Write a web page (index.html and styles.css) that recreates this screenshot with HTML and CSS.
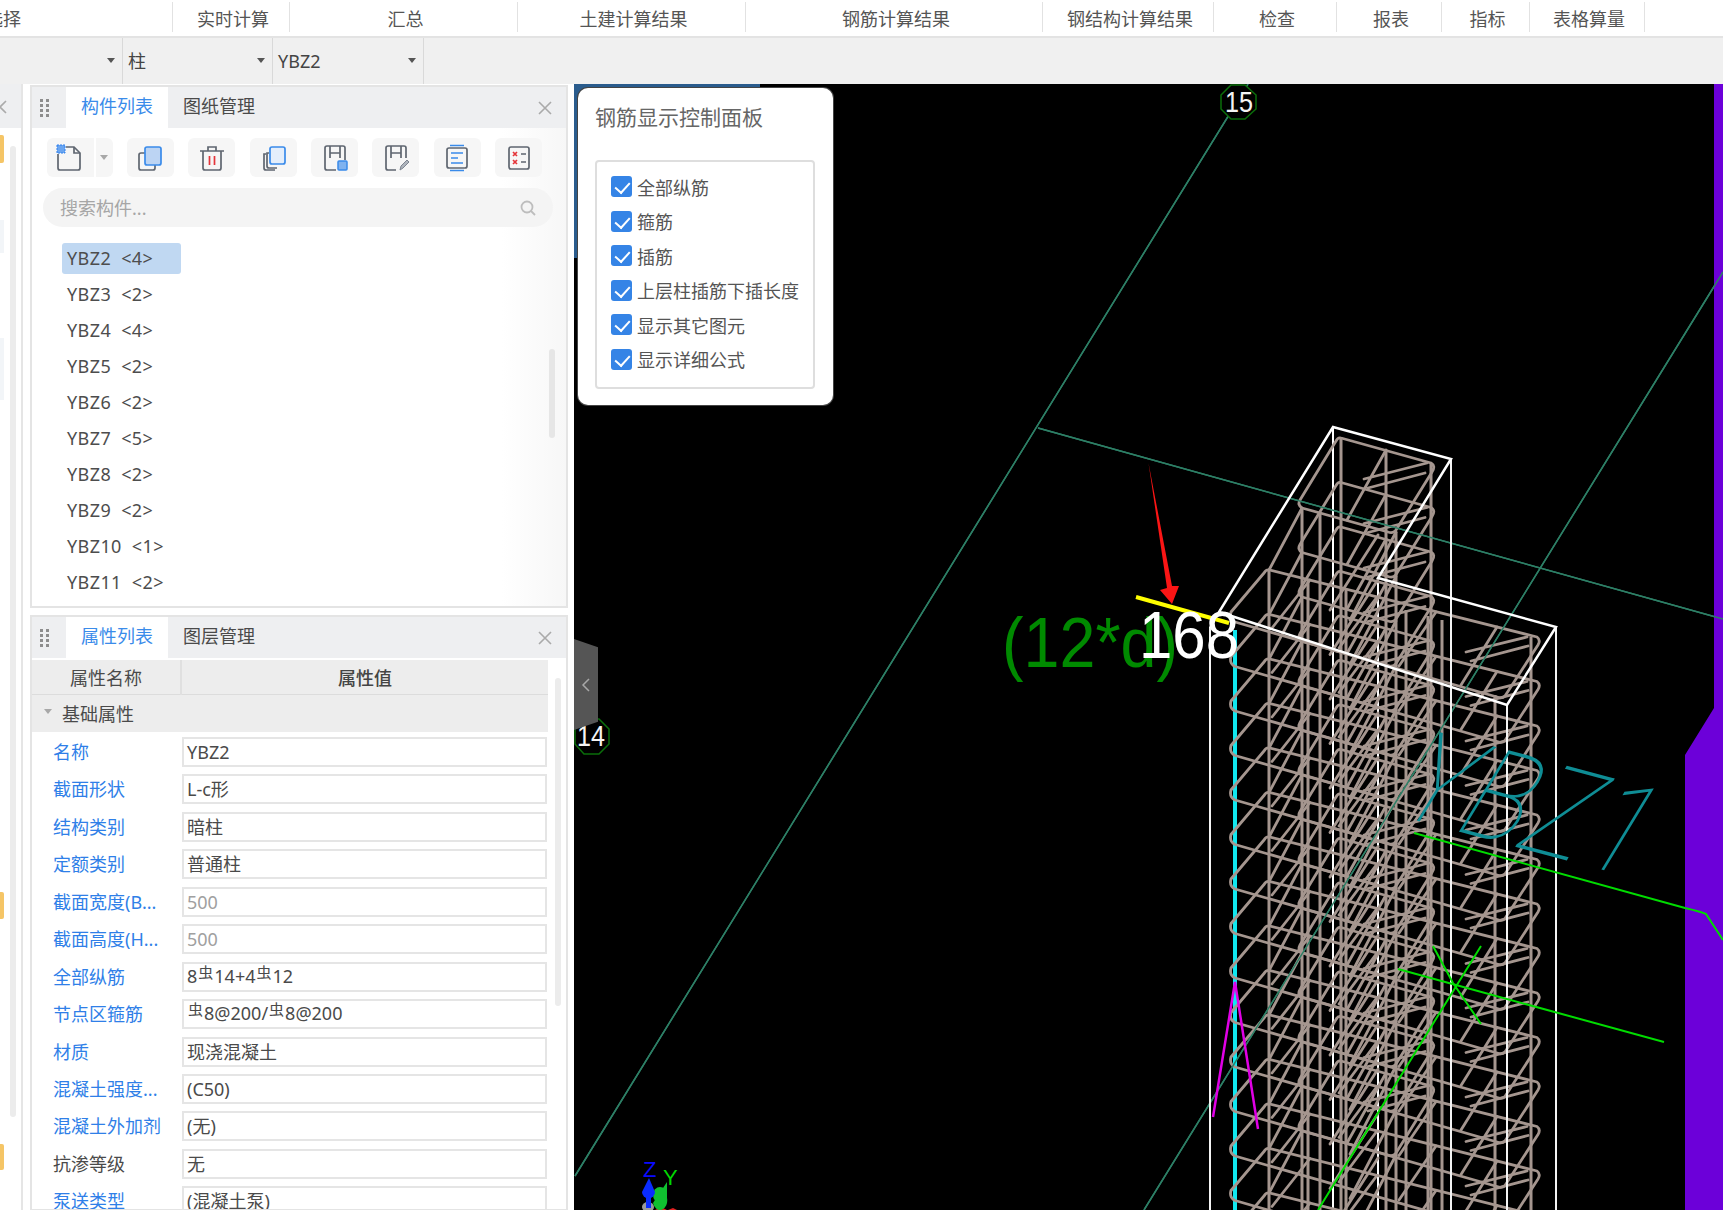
FILE: index.html
```html
<!DOCTYPE html>
<html lang="zh-CN">
<head>
<meta charset="utf-8">
<title>钢筋显示控制面板</title>
<link rel="stylesheet" href="styles.css">
</head>
<body>
<header class="menu">
  <div class="menu-cell menu-first"><span class="menu-clip">选择</span></div>
  <div class="menu-cell">实时计算</div>
  <div class="menu-cell">汇总</div>
  <div class="menu-cell">土建计算结果</div>
  <div class="menu-cell">钢筋计算结果</div>
  <div class="menu-cell">钢结构计算结果</div>
  <div class="menu-cell">检查</div>
  <div class="menu-cell">报表</div>
  <div class="menu-cell">指标</div>
  <div class="menu-cell">表格算量</div>
</header>
<nav class="selects">
  <div class="select"><i class="caret"></i></div>
  <div class="select">柱<i class="caret"></i></div>
  <div class="select">YBZ2<i class="caret"></i></div>
</nav>
<main class="main">
  <aside class="sidebar">
    <div class="strip">
      <div class="strip-head"><svg class="strip-x" width="14" height="14" viewBox="0 0 14 14"><path d="M1 1l12 12M13 1L1 13"/></svg></div>
      <i class="strip-tag tag-a"></i><i class="strip-tag tag-b"></i><i class="strip-tag tag-c"></i>
      <i class="strip-pale pale-a"></i><i class="strip-pale pale-b"></i>
      <i class="strip-scroll"></i>
    </div>
    <div class="panels">
      <section class="panel panel-list">
        <div class="panel-head">
          <svg class="grip" width="10" height="19" viewBox="0 0 10 19"><g><rect x="0" y="0" width="3" height="3"/><rect x="6" y="0" width="3" height="3"/><rect x="0" y="5" width="3" height="3"/><rect x="6" y="5" width="3" height="3"/><rect x="0" y="10" width="3" height="3"/><rect x="6" y="10" width="3" height="3"/><rect x="0" y="15" width="3" height="3"/><rect x="6" y="15" width="3" height="3"/></g></svg>
          <div class="tab tab-on">构件列表</div>
          <div class="tab">图纸管理</div>
          <svg class="close" width="14" height="14" viewBox="0 0 14 14"><path d="M1 1l12 12M13 1L1 13"/></svg>
        </div>
        <div class="tools">
          <div class="tool tool-split">
            <svg width="26" height="28" viewBox="0 0 26 28" class="ico"><path d="M10 3h8l6 6v15a2 2 0 0 1-2 2H4a2 2 0 0 1-2-2V10"/><path d="M18 3v6h6"/><path class="blue-fill" d="M1 1h8v8H1z"/></svg>
          </div>
          <div class="tool-drop"><i class="caret caret-grey"></i></div>
          <div class="tool">
            <svg width="26" height="28" viewBox="0 0 26 28" class="ico"><path d="M8 9H4a2 2 0 0 0-2 2v13a2 2 0 0 0 2 2h12a2 2 0 0 0 2-2v-3"/><rect class="blue-box" x="8" y="3" width="16" height="18" rx="2"/></svg>
          </div>
          <div class="tool">
            <svg width="26" height="28" viewBox="0 0 26 28" class="ico"><path d="M1 7h24M9 7V3h8v4M4 7v17a2 2 0 0 0 2 2h14a2 2 0 0 0 2-2V7"/><path class="red" d="M10.500 12v9M15.500 12v9"/></svg>
          </div>
          <div class="tool">
            <svg width="26" height="28" viewBox="0 0 26 28" class="ico"><path d="M6 10H4v14a2 2 0 0 0 2 2h9"/><path d="M9 9H7v13a2 2 0 0 0 2 2h8"/><rect class="blue-pale" x="10" y="3" width="15" height="17" rx="2"/></svg>
          </div>
          <div class="tool">
            <svg width="26" height="28" viewBox="0 0 26 28" class="ico"><path d="M14 26H5a2 2 0 0 1-2-2V4a2 2 0 0 1 2-2h16a2 2 0 0 1 2 2v12"/><path d="M8 14V2M8 9h10M18 2v12"/><rect class="blue-solid" x="16" y="17" width="9" height="9" rx="1"/></svg>
          </div>
          <div class="tool">
            <svg width="26" height="28" viewBox="0 0 26 28" class="ico"><path d="M13 26H5a2 2 0 0 1-2-2V4a2 2 0 0 1 2-2h16a2 2 0 0 1 2 2v10"/><path d="M8 14V2M8 9h10M18 2v12"/><path class="pen" d="M17 26l1-4 6-6 2 2-6 6z"/></svg>
          </div>
          <div class="tool">
            <svg width="26" height="28" viewBox="0 0 26 28" class="ico"><rect x="3" y="4" width="20" height="20" rx="2"/><path class="blue-line" d="M6 1.500h14M6 26.500h14M7 9h12M7 14h7M7 19h12"/></svg>
          </div>
          <div class="tool">
            <svg width="26" height="28" viewBox="0 0 26 28" class="ico"><rect x="3" y="3" width="20" height="22" rx="2"/><path class="red" d="M7 8l4 4M11 8l-4 4M7 16l4 4M11 16l-4 4"/><path d="M15 10h5M15 18h5"/></svg>
          </div>
        </div>
        <div class="search">
          <span>搜索构件...</span>
          <svg width="16" height="16" viewBox="0 0 16 16" class="search-ico"><circle cx="7" cy="7" r="5.500"/><path d="M11 11l4 4"/></svg>
        </div>
        <ul class="items">
          <li class="item item-on">YBZ2 &lt;4&gt;</li>
          <li class="item">YBZ3 &lt;2&gt;</li>
          <li class="item">YBZ4 &lt;4&gt;</li>
          <li class="item">YBZ5 &lt;2&gt;</li>
          <li class="item">YBZ6 &lt;2&gt;</li>
          <li class="item">YBZ7 &lt;5&gt;</li>
          <li class="item">YBZ8 &lt;2&gt;</li>
          <li class="item">YBZ9 &lt;2&gt;</li>
          <li class="item">YBZ10 &lt;1&gt;</li>
          <li class="item">YBZ11 &lt;2&gt;</li>
        </ul>
        <i class="list-scroll"></i>
      </section>
      <section class="panel panel-props">
        <div class="panel-head">
          <svg class="grip" width="10" height="19" viewBox="0 0 10 19"><g><rect x="0" y="0" width="3" height="3"/><rect x="6" y="0" width="3" height="3"/><rect x="0" y="5" width="3" height="3"/><rect x="6" y="5" width="3" height="3"/><rect x="0" y="10" width="3" height="3"/><rect x="6" y="10" width="3" height="3"/><rect x="0" y="15" width="3" height="3"/><rect x="6" y="15" width="3" height="3"/></g></svg>
          <div class="tab tab-on">属性列表</div>
          <div class="tab">图层管理</div>
          <svg class="close" width="14" height="14" viewBox="0 0 14 14"><path d="M1 1l12 12M13 1L1 13"/></svg>
        </div>
        <div class="t-head">
          <div class="t-name">属性名称</div>
          <div class="t-value">属性值</div>
        </div>
        <div class="t-group"><i class="caret caret-grey"></i>基础属性</div>
        <div class="rows">
          <div class="row"><label class="key">名称</label><div class="val">YBZ2</div></div>
          <div class="row"><label class="key">截面形状</label><div class="val">L-c形</div></div>
          <div class="row"><label class="key">结构类别</label><div class="val">暗柱</div></div>
          <div class="row"><label class="key">定额类别</label><div class="val">普通柱</div></div>
          <div class="row"><label class="key">截面宽度(B...</label><div class="val val-off">500</div></div>
          <div class="row"><label class="key">截面高度(H...</label><div class="val val-off">500</div></div>
          <div class="row"><label class="key">全部纵筋</label><div class="val val-bar">8<sup class="bar">虫</sup>14+4<sup class="bar">虫</sup>12</div></div>
          <div class="row"><label class="key">节点区箍筋</label><div class="val val-bar"><sup class="bar">虫</sup>8@200/<sup class="bar">虫</sup>8@200</div></div>
          <div class="row"><label class="key">材质</label><div class="val">现浇混凝土</div></div>
          <div class="row"><label class="key">混凝土强度...</label><div class="val">(C50)</div></div>
          <div class="row"><label class="key">混凝土外加剂</label><div class="val">(无)</div></div>
          <div class="row"><label class="key key-dark">抗渗等级</label><div class="val">无</div></div>
          <div class="row"><label class="key">泵送类型</label><div class="val">(混凝土泵)</div></div>
        </div>
        <i class="props-scroll"></i>
      </section>
    </div>
  </aside>
  <div class="canvas">
    <svg class="scene" width="1149" height="1126" viewBox="574 84 1149 1126">
      <defs>
        <g id="lvl" class="rebar">
          <path d="M1341 438L1431 463Q1436 466 1432 472L1396 530Q1393 534 1388 532L1302 508Q1297 505 1300 500L1336 441Q1338 437 1341 438Z"/>
          <path d="M1386 450L1347 520M1364 479L1427 463M1368 488L1425 473"/>
          <path d="M1270 570L1537 637Q1541 640 1538 645L1505 696Q1502 699 1497 697L1235 622Q1229 619 1231 612L1264 573Q1266 569 1270 570Z"/>
          <path d="M1272 628L1310 580M1339 648L1377 597M1399 666L1436 612M1461 685L1497 627M1466 652L1527 637M1471 661L1528 646"/>
          <path d="M1302 508L1269 570M1396 532L1350 620M1378 535L1330 610"/>
        </g>
      </defs>

      <path class="grid" d="M1248 84L575 1176M1038 428L1723 619M1723 272L1144 1210"/>

      <polygon class="purple" points="1714,84 1723,84 1723,1210 1685,1210 1685,755 1714,708"/>

      <path class="white back" d="M1333 427V1210M1378 578V1210"/>
      <path class="cyan" d="M1235 630V1210"/>

      <g class="bars">
        <path d="M1341 438V1210M1386 450V1210M1431 463V1210M1302 508V1210M1320 512V1210M1396 532V1210"/>
        <path d="M1269 570V1210M1308 580V1210M1346 590V1210M1406 610V1210M1428 616V1210M1442 620V1210M1495 695V1210M1531 637V1210"/>
      </g>

      <use href="#lvl"/>
      <use href="#lvl" y="44.5"/>
      <use href="#lvl" y="89"/>
      <use href="#lvl" y="133.5"/>
      <use href="#lvl" y="178"/>
      <use href="#lvl" y="222.5"/>
      <use href="#lvl" y="267"/>
      <use href="#lvl" y="311.5"/>
      <use href="#lvl" y="356"/>
      <use href="#lvl" y="400.5"/>
      <use href="#lvl" y="445"/>
      <use href="#lvl" y="489.5"/>
      <use href="#lvl" y="534"/>
      <use href="#lvl" y="578.5"/>
      <use href="#lvl" y="623"/>

      <path class="grid" d="M1248 84L575 1176M1038 428L1723 619M1723 272L1144 1210"/>

      <path class="white" d="M1210 627V1210M1451 459V1210M1507 705V1210M1556 627V1210"/>
      <path class="white strong" d="M1333 427L1451 459L1378 578L1556 627L1507 705L1219 612L1333 427ZM1219 612L1210 628"/>

      <path class="magenta" d="M1213 1117L1235 982L1258 1129"/>

      <path class="lime" d="M1414 833L1685 908Q1702 912 1706 914L1723 940"/>
      <path class="lime" d="M1398 969L1456 985L1664 1042"/>
      <path class="lime" d="M1433 946L1453 983L1481 1024M1481 946L1318 1210"/>

      <text class="cad-name" transform="matrix(1.02 .27 -.698 1.145 1388 813)">YBZ1</text>

      <line class="yellow" x1="1136" y1="597" x2="1229" y2="623"/>
      <text class="cad-green" x="1002" y="667" textLength="176" lengthAdjust="spacingAndGlyphs">(12*d)</text>
      <text class="cad-white" x="1139" y="658" textLength="100" lengthAdjust="spacingAndGlyphs">168</text>
      <polygon class="arrow" points="1148.500,463 1172,586 1179,586 1172,604 1160,590 1167,588"/>

      <polygon class="axis-tag" points="1231,85 1245,85 1256,95 1256,109 1245,119 1231,119 1221,109 1221,95"/>
      <text class="axis-no" x="1225" y="112" textLength="28" lengthAdjust="spacingAndGlyphs">15</text>
      <polygon class="axis-tag" points="584,719 599,719 609,729 609,744 599,754 584,754 575,744 575,729"/>
      <text class="axis-no" x="577" y="746" textLength="28" lengthAdjust="spacingAndGlyphs">14</text>

      <text class="gizmo gizmo-z" x="643" y="1177">Z</text>
      <text class="gizmo gizmo-y" x="663" y="1185">Y</text>
      <ellipse class="g-grey" cx="648" cy="1207" rx="6" ry="5"/>
      <path class="g-red" d="M655 1210l6-3 6 3M668 1210l5-2 4 2"/>
      <path class="g-green" d="M653 1203L667 1182V1198A6 8 0 0 1 653 1203Z"/>
      <ellipse class="g-green" cx="660" cy="1195" rx="7" ry="8"/>
      <path class="g-blue" d="M649 1178L655 1192A6 6 0 0 1 642 1192Z"/>
      <rect class="g-blue" x="646" y="1195" width="5" height="13"/>
    </svg>
    <i class="under-card"></i>
    <div class="handle"><svg width="10" height="14" viewBox="0 0 10 14"><path d="M8 1L2 7l6 6"/></svg></div>
    <section class="card">
      <h2 class="card-title">钢筋显示控制面板</h2>
      <div class="card-box">
        <div class="opt"><i class="check"></i>全部纵筋</div>
        <div class="opt"><i class="check"></i>箍筋</div>
        <div class="opt"><i class="check"></i>插筋</div>
        <div class="opt"><i class="check"></i>上层柱插筋下插长度</div>
        <div class="opt"><i class="check"></i>显示其它图元</div>
        <div class="opt"><i class="check"></i>显示详细公式</div>
      </div>
    </section>
  </div>
</main>
</body>
</html>
```

FILE: styles.css
```css
* { box-sizing: border-box; }
html, body { margin: 0; padding: 0; }
body {
  width: 1723px;
  height: 1210px;
  overflow: hidden;
  background: #fff;
  color: #4a4a4a;
  font-family: "Noto Sans", "Noto Sans CJK SC", sans-serif;
  font-size: 18px;
  display: flex;
  flex-direction: column;
}
i { display: block; font-style: normal; }

.menu {
  flex: none;
  height: 38px;
  background: #fff;
  border-bottom: 2px solid #e3e3e3;
  display: grid;
  grid-template-columns: 173px 117px 228px 228px 297px 171px 123px 105px 88px 115px;
}
.menu-cell {
  height: 30px;
  margin-top: 2px;
  padding-left: 4px;
  line-height: 34px;
  text-align: center;
  color: #555;
  border-right: 1px solid #e2e2e2;
  overflow: hidden;
  white-space: nowrap;
}
.menu-first { text-align: left; padding-left: 0; }
.menu-clip { margin-left: -15px; display: inline-block; }

.selects {
  flex: none;
  height: 46px;
  background: #f0f0f0;
  display: grid;
  grid-template-columns: 123px 150px 151px;
}
.select {
  position: relative;
  border-right: 1px solid #d9d9d9;
  padding-left: 5px;
  line-height: 46px;
  color: #444;
}
.caret {
  width: 0;
  height: 0;
  border-left: 4px solid transparent;
  border-right: 4px solid transparent;
  border-top: 5px solid #555;
}
.select .caret { position: absolute; right: 7px; top: 20px; }
.caret-grey { border-top-color: #a8a8a8; }

.main { flex: 1; min-height: 0; display: flex; }
.sidebar {
  flex: none;
  width: 574px;
  display: flex;
  gap: 7px;
  padding-right: 6px;
  background: #fff;
}
.strip {
  position: relative;
  flex: none;
  width: 23px;
  border-right: 2px solid #e5e5e5;
  overflow: hidden;
}
.strip-head { height: 44px; background: #eeeff1; }
.strip-x { position: absolute; left: -7px; top: 16px; }
.strip-x path, .close path { fill: none; stroke: #aaa; stroke-width: 1.600; }
.strip-tag { position: absolute; left: 0; width: 4px; background: #f5c566; border-radius: 0 2px 2px 0; }
.tag-a { top: 51px; height: 28px; }
.tag-b { top: 808px; height: 27px; }
.tag-c { top: 1060px; height: 26px; }
.strip-pale { position: absolute; left: 0; width: 4px; background: #f2f5f8; }
.pale-a { top: 136px; height: 33px; }
.pale-b { top: 254px; height: 62px; }
.strip-scroll { position: absolute; left: 10px; top: 62px; width: 6px; height: 971px; background: #ececec; border-radius: 3px; }

.panels {
  flex: 1;
  min-width: 0;
  display: flex;
  flex-direction: column;
  gap: 7px;
  padding-top: 1px;
}
.panel {
  position: relative;
  flex: none;
  border: 2px solid #e4e4e4;
  background: #fff;
  overflow: hidden;
}
.panel-list { height: 523px; background: linear-gradient(90deg, #fff 88%, #f7f7f7 100%); }
.panel-props { height: 596px; }
.panel-head {
  height: 41px;
  background: #eeeff1;
  display: flex;
  align-items: flex-end;
  position: relative;
}
.grip { position: absolute; left: 8px; top: 12px; fill: #8d8d8d; }
.tab {
  width: 102px;
  height: 41px;
  line-height: 39px;
  text-align: center;
  color: #4a4a4a;
}
.tab:first-of-type { margin-left: 34px; }
.tab-on { background: #fff; color: #3a8bea; margin-left: 34px; }
.close { position: absolute; right: 14px; top: 14px; }

.tools { display: flex; align-items: stretch; gap: 14.400px; margin: 10px 0 0 14.500px; }
.tool {
  width: 47px;
  height: 39px;
  background: #f6f6f6;
  border-radius: 6px;
  display: flex;
  align-items: center;
  justify-content: center;
}
.tool-split { border-radius: 6px 0 0 6px; margin-right: -12.400px; padding-right: 3px; }
.tool-drop {
  width: 17px;
  height: 39px;
  margin-right: 0;
  background: #f6f6f6;
  border-radius: 0 6px 6px 0;
  display: flex;
  align-items: center;
  justify-content: center;
}
.ico { fill: none; stroke: #5f6670; stroke-width: 1.700; }
.blue-fill { fill: #6aa5f0; stroke: #2f80ed; stroke-width: 1; stroke-dasharray: 2 1; }
.blue-box { fill: #bcd4f3; stroke: #3a8bea; }
.blue-pale { fill: #e4eefb; stroke: #3a8bea; }
.blue-solid { fill: #7fb2ef; stroke: #3a8bea; stroke-width: 1.500; }
.blue-line { stroke: #3a8bea; }
.red { stroke: #e5353a; }
.pen { fill: #aeb4bc; stroke: #7d8590; stroke-width: 1; }

.search {
  position: relative;
  margin: 11px 13px 0 11px;
  height: 39px;
  padding-left: 17px;
  line-height: 40px;
  background: #f4f4f4;
  border-radius: 20px;
  color: #a6a6a6;
}
.search-ico { position: absolute; right: 17px; top: 12px; fill: none; stroke: #bdbdbd; stroke-width: 1.800; }

.items { list-style: none; margin: 16px 0 0 30px; padding: 0; display: flex; flex-direction: column; gap: 5px; }
.item {
  width: 119px;
  height: 31px;
  line-height: 31px;
  padding-left: 5px;
  letter-spacing: .4px;
  word-spacing: 5px;
  color: #4d4d4d;
  white-space: nowrap;
  border-radius: 3px;
}
.item-on { background: #c0d8f2; }
.list-scroll { position: absolute; left: 517px; top: 262px; width: 6px; height: 89px; border-radius: 3px; background: #e6e6e6; }

.t-head {
  width: 516px;
  height: 35px;
  margin-top: 2px;
  display: grid;
  grid-template-columns: 150px 1fr;
  background: #ededed;
  border-bottom: 1px solid #dcdcdc;
  line-height: 36px;
  text-align: center;
}
.t-name { border-right: 2px solid #e0e0e0; }
.t-value { font-weight: 500; color: #444; }
.t-group {
  position: relative;
  width: 516px;
  height: 37px;
  padding-left: 30px;
  line-height: 38px;
  background: #ededed;
}
.t-group .caret { position: absolute; left: 12px; top: 14px; }

.rows { display: flex; flex-direction: column; gap: 7.450px; padding-top: 5px; }
.row { display: grid; grid-template-columns: 150px 365px; height: 30px; }
.key { padding-left: 21px; line-height: 31px; color: #2f7fe8; white-space: nowrap; overflow: hidden; }
.key-dark { color: #4a4a4a; }
.val {
  border: 2px solid #e5e5e5;
  padding-left: 3px;
  line-height: 27px;
  color: #4a4a4a;
  white-space: nowrap;
  overflow: hidden;
}
.val-off { color: #a0a0a0; }
.val-bar { line-height: 25px; }
.bar { font-size: 15px; line-height: 0; vertical-align: 5px; margin: 0 1px; }
.props-scroll { position: absolute; left: 523px; top: 61px; width: 6px; height: 328px; border-radius: 3px; background: #ececec; }

.canvas { position: relative; flex: 1; min-width: 0; background: #000; overflow: hidden; }
.scene { display: block; }
.grid { fill: none; stroke: #2d7f66; stroke-width: 1.500; }
.purple { fill: #6c00d9; }
.white { fill: none; stroke: #f4f4f4; stroke-width: 2; }
.white.back { stroke: #fff; }
.white.strong { stroke: #fff; stroke-width: 2.500; stroke-linejoin: miter; }
.cyan { fill: none; stroke: #10e8f0; stroke-width: 4; }
.bars path { fill: none; stroke: #a5968f; stroke-width: 3; }
.rebar path { fill: none; stroke: #a5968f; stroke-width: 2.800; stroke-linejoin: round; stroke-linecap: round; }
.magenta { fill: none; stroke: #e000e6; stroke-width: 2.500; }
.lime { fill: none; stroke: #00dc00; stroke-width: 2; }
.yellow { stroke: #ffff00; stroke-width: 4; }
.arrow { fill: #fb1515; }
.cad-name { font-family: Roboto, "Liberation Sans", sans-serif; font-weight: 100; font-size: 100px; fill: #0f8d95; }
.cad-green { font-family: "Liberation Sans", sans-serif; font-size: 70px; fill: #008a00; }
.cad-white { font-family: "Liberation Sans", sans-serif; font-size: 66px; fill: #fff; }
.axis-tag { fill: #000; stroke: #0a6e0a; stroke-width: 1.500; }
.axis-no { font-family: "Liberation Sans", sans-serif; font-size: 30px; fill: #f4f4f4; }
.gizmo { font-family: "Liberation Sans", sans-serif; font-size: 22px; }
.gizmo-z { fill: #0a0aff; }
.gizmo-y { fill: #00d800; }
.g-blue { fill: #0a2cff; }
.g-green { fill: #10c030; }
.g-grey { fill: #9a9a9a; }
.g-red { fill: #e02020; }

.under-card { position: absolute; left: 0; top: 0; width: 186px; height: 174px; background: #2a5c8d; }
.handle {
  position: absolute;
  left: 0;
  top: 555px;
  width: 24px;
  height: 91px;
  background: #555;
  clip-path: polygon(0 0, 100% 9%, 100% 91%, 0 100%);
  display: flex;
  align-items: center;
  justify-content: center;
}
.handle path { fill: none; stroke: #a8a8a8; stroke-width: 1.500; }

.card {
  position: absolute;
  left: 4px;
  top: 4px;
  width: 255px;
  height: 317px;
  padding: 0 18px 0 17px;
  background: #fff;
  border-radius: 10px;
  box-shadow: 0 0 0 1px #444;
}
.card-title { margin: 0; padding-top: 11px; height: 72px; font-size: 21px; font-weight: 400; line-height: 36px; color: #666; }
.card-box {
  height: 229px;
  border: 2px solid #dedede;
  border-radius: 4px;
  padding: 14px 0 0 14px;
  display: flex;
  flex-direction: column;
  gap: 13.500px;
}
.opt { display: flex; align-items: center; gap: 5px; height: 21px; color: #555; white-space: nowrap; }
.check { position: relative; flex: none; width: 21px; height: 21px; border-radius: 3px; background: #3584e6; }
.check::after {
  content: "";
  position: absolute;
  left: 7px;
  top: 3px;
  width: 7px;
  height: 12px;
  border-right: 2.500px solid #fff;
  border-bottom: 2.500px solid #fff;
  transform: rotate(42deg);
}
```
